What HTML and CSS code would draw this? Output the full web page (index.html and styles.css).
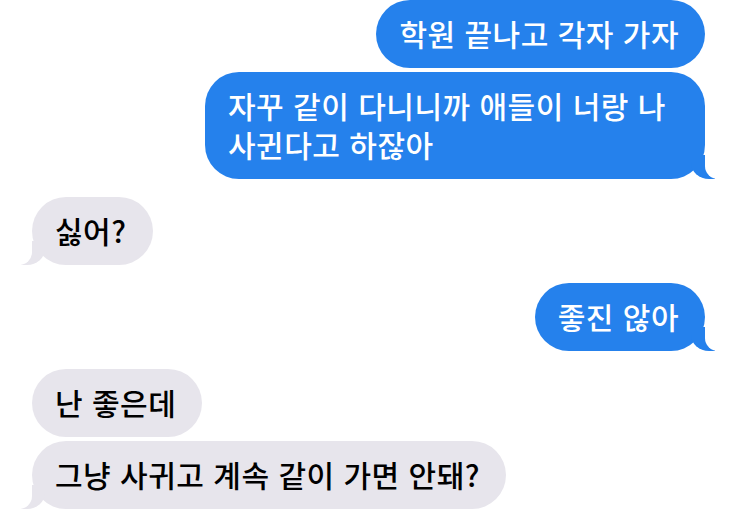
FILE: index.html
```html
<!DOCTYPE html>
<html lang="ko">
<head>
<meta charset="utf-8">
<link rel="stylesheet" href="styles.css">
</head>
<body>
<div class="chat">
  <div class="bubble sent">학원 끝나고 각자 가자</div>
  <div class="bubble sent tail close">자꾸 같이 다니니까 애들이 너랑 나 사귄다고 하잖아</div>
  <div class="bubble recv tail">싫어?</div>
  <div class="bubble sent tail">좋진 않아</div>
  <div class="bubble recv">난 좋은데</div>
  <div class="bubble recv tail close">그냥 사귀고 계속 같이 가면 안돼?</div>
</div>
</body>
</html>
```
FILE: styles.css
```css
html, body {
  margin: 0;
  padding: 0;
  background: #ffffff;
}
.chat {
  display: flex;
  flex-direction: column;
  padding: 0 31px 0 32px;
  font-family: "Noto Sans CJK KR", "Noto Sans", sans-serif;
  font-size: 30px;
  line-height: 39px;
  font-weight: 500;
  letter-spacing: 0.5px;
  word-break: keep-all;
}
.bubble {
  position: relative;
  box-sizing: border-box;
  max-width: 500px;
  width: fit-content;
  padding: 14px 26px 15px 23px;
  border-radius: 34px;
  margin-top: 18px;
}
.bubble:first-child {
  margin-top: 0;
}
.bubble.close {
  margin-top: 4px;
}
.sent {
  align-self: flex-end;
  background: #2581ec;
  color: #ffffff;
  padding: 14px 26px 15px 23px;
}
.recv {
  align-self: flex-start;
  background: #e7e5ec;
  color: #000000;
}
.tail.sent::before,
.tail.sent::after,
.tail.recv::before,
.tail.recv::after {
  content: "";
  position: absolute;
  bottom: 0;
  height: 24px;
}
.tail.sent::before {
  right: -10px;
  width: 24px;
  background: #2581ec;
  border-bottom-left-radius: 18px 16px;
}
.tail.sent::after {
  right: -26px;
  width: 26px;
  background: #ffffff;
  border-bottom-left-radius: 13px;
}
.tail.recv::before {
  left: -11px;
  width: 24px;
  background: #e7e5ec;
  border-bottom-right-radius: 18px 16px;
}
.tail.recv::after {
  left: -26px;
  width: 26px;
  background: #ffffff;
  border-bottom-right-radius: 13px;
}
```
